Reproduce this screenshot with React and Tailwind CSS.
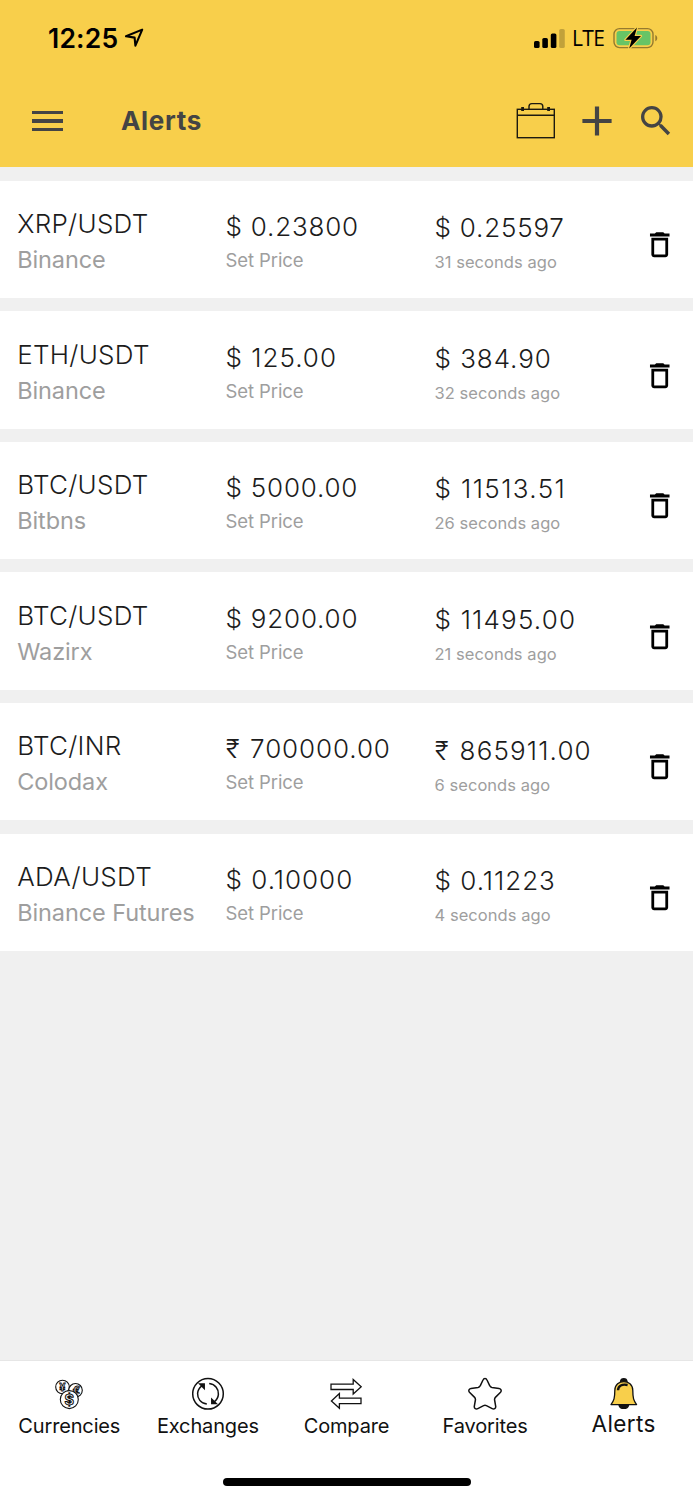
// AlertsPage.jsx
import { MdDeleteOutline, MdSearch } from 'react-icons/md';

const alerts = [
  { pair: 'XRP/USDT', exchange: 'Binance', setPrice: '$ 0.23800', price: '$ 0.25597', updated: '31 seconds ago' },
  { pair: 'ETH/USDT', exchange: 'Binance', setPrice: '$ 125.00', price: '$ 384.90', updated: '32 seconds ago', setSpacing: 'tracking-[1px]', spacing: 'tracking-[0.95px]' },
  { pair: 'BTC/USDT', exchange: 'Bitbns', setPrice: '$ 5000.00', price: '$ 11513.51', updated: '26 seconds ago', spacing: 'tracking-[1.4px]' },
  { pair: 'BTC/USDT', exchange: 'Wazirx', setPrice: '$ 9200.00', price: '$ 11495.00', updated: '21 seconds ago', spacing: 'tracking-[1.2px]' },
  { pair: 'BTC/INR', exchange: 'Colodax', setPrice: '₹ 700000.00', price: '₹ 865911.00', updated: '6 seconds ago', setSpacing: 'pl-[0.5px] tracking-[0.9px] [word-spacing:1.5px]', spacing: 'pl-[0.5px] tracking-[1.15px] [word-spacing:1.5px]' },
  { pair: 'ADA/USDT', exchange: 'Binance Futures', setPrice: '$ 0.10000', price: '$ 0.11223', updated: '4 seconds ago', setSpacing: 'tracking-[1px]', spacing: 'tracking-[1px]' },
];

function StatusBar() {
  return (
    <div className="flex h-[75px] items-center pt-px pl-[48px] pr-[35px] text-black">
      <span className="text-[26.5px] leading-[32px] font-semibold tracking-[0.2px]">12:25</span>
      <svg className="ml-[6px] h-[20px] w-[20px]" viewBox="0 0 20 20" fill="none" stroke="currentColor" strokeWidth="2.1" strokeLinejoin="round">
        <path d="M18.2 1.6 L2 8.3 L10.6 9.6 L11.4 17.6 Z" />
      </svg>
      <svg className="ml-auto h-[21px] w-[31px]" viewBox="0 0 31 21">
        <rect x="0" y="13" width="5.6" height="7" rx="1.6" />
        <rect x="8.3" y="10" width="5.6" height="10" rx="1.6" />
        <rect x="16.8" y="5.5" width="5.6" height="14.5" rx="1.6" />
        <rect x="25.2" y="1" width="5.6" height="19" rx="1.6" opacity="0.22" />
      </svg>
      <span className="ml-[7px] w-[33px] font-['Open_Sans'] text-[21px] leading-[32px] font-medium tracking-[-0.6px]">LTE</span>
      <svg className="ml-[8px] h-[24px] w-[45px]" viewBox="0 0 45 24">
        <rect x="1" y="2.6" width="39" height="19" rx="5.5" fill="none" stroke="#957a2f" strokeWidth="1.4" />
        <path d="M42.3 9 c2.6 1 2.6 5.2 0 6.2 z" fill="#957a2f" />
        <rect x="3.5" y="5" width="34" height="14.2" rx="3" fill="#67c466" />
        <path d="M24 1.5 L12.4 13.8 H18.6 L16.2 22.5 L28 10 H21.6 Z" fill="#000" stroke="#f8cf4b" strokeWidth="2.4" strokeLinejoin="round" paintOrder="stroke" />
      </svg>
    </div>
  );
}

function Toolbar() {
  return (
    <div className="flex h-[92px] items-center pl-[32px] pr-[17.5px] text-[#444]">
      <div className="flex w-[30.5px] flex-col gap-[5px]">
        <div className="h-[3.4px] bg-[#444]" />
        <div className="h-[3.4px] bg-[#444]" />
        <div className="h-[3.4px] bg-[#444]" />
      </div>
      <h1 className="ml-[58.5px] text-[26px] leading-[32px] font-bold tracking-[0.7px]">Alerts</h1>
      <svg className="mb-[2px] ml-auto h-[38px] w-[40px]" viewBox="0 0 40 38" fill="none" stroke="#1d1a10" strokeWidth="1.4">
        <rect x="1.3" y="8.3" width="37" height="28.4" />
        <path d="M1.3 14.3H38.3" />
        <path d="M13 8V5.6C13 4 14 2.6 15.8 2.6H24C25.8 2.6 26.8 4 26.8 5.6V8" />
        <path d="M6.6 6V10M32.6 6V10" strokeWidth="2.8" />
      </svg>
      <svg className="ml-[26.5px] h-[30px] w-[30px]" viewBox="0 0 30 30" stroke="#444" strokeWidth="4.2">
        <path d="M15 .4V29.6M.4 15H29.6" />
      </svg>
      <MdSearch className="ml-[23.5px] h-[40px] w-[40px]" />
    </div>
  );
}

function AlertRow({ alert }) {
  return (
    <div className="mt-[13.3px] flex h-[117.3px] bg-white text-[26px] text-[#1c1c1c]">
      <div className="w-[208.5px] pt-[25.3px] pl-[17.2px] whitespace-nowrap">
        <p className="leading-[36px] font-[350] tracking-[0.3px]">{alert.pair}</p>
        <p className="text-[23.5px] leading-[36px] tracking-[-0.1px] text-[#9e9e9e]">{alert.exchange}</p>
      </div>
      <div className="w-[209px] pt-[29.3px] pl-[17px] whitespace-nowrap">
        <p className={`leading-[34px] font-[350] ${alert.setSpacing || 'tracking-[0.8px]'}`}>{alert.setPrice}</p>
        <p className="text-[18.5px] leading-[32px] tracking-[-0.1px] text-[#9e9e9e]">Set Price</p>
      </div>
      <div className="pt-[30.6px] pl-[17px] whitespace-nowrap">
        <p className={`leading-[34px] font-[350] ${alert.spacing || 'tracking-[0.8px]'}`}>{alert.price}</p>
        <p className="text-[16.5px] leading-[34px] tracking-[0.05px] text-[#9e9e9e]">{alert.updated}</p>
      </div>
      <button className="mt-[11px] mr-[17px] ml-auto self-center text-black">
        <MdDeleteOutline className="h-[33.5px] w-[33.5px]" />
      </button>
    </div>
  );
}

function CoinsIcon() {
  return (
    <svg className="h-[32px] w-[32px] font-['Inter'] font-bold" viewBox="0 0 32 32" fill="#fff" stroke="#111" strokeWidth="1.1">
      <circle cx="9.5" cy="9" r="6.8" />
      <text x="9.5" y="13" fontSize="11" textAnchor="middle" strokeWidth="0.8">¥</text>
      <circle cx="22.5" cy="12.3" r="6.8" />
      <text x="23.5" y="16.3" fontSize="11" textAnchor="middle" strokeWidth="0.8">€</text>
      <circle cx="16.3" cy="21.6" r="9" />
      <text x="16.3" y="26.8" fontSize="14.5" textAnchor="middle" strokeWidth="1">$</text>
    </svg>
  );
}

function ExchangeIcon() {
  return (
    <svg className="h-[34px] w-[34px]" viewBox="0 0 34 34" fill="none" stroke="#111" strokeWidth="1.5">
      <circle cx="17" cy="16.8" r="15.3" />
      <path d="M15.8 27C9.6 26.3 6.4 21.5 6.6 16.4C6.8 12.8 8.2 10.8 10.8 8.8" />
      <path d="M18.2 6.6C24.4 7.3 27.6 12.1 27.4 17.2C27.2 20.8 25.8 22.8 23.2 24.8" />
      <path d="M8.8 7H13.2V11.4Z" fill="#111" />
      <path d="M25.2 26.6H20.8V22.2Z" fill="#111" />
    </svg>
  );
}

function CompareIcon() {
  return (
    <svg className="h-[34px] w-[34px]" viewBox="0 0 34 34" fill="none" stroke="#111" strokeWidth="1.3">
      <path d="M2 7.1H24.2V2.5L32.2 9.8L24.2 17.1V12.5H2Z" />
      <path d="M32 21.2H10.4V16.6L2.4 24L10.4 31.3V26.6H32Z" />
    </svg>
  );
}

function StarIcon() {
  return (
    <svg className="h-[34px] w-[34px]" viewBox="0 0 34 34" fill="none" stroke="#111" strokeWidth="1.5" strokeLinejoin="round">
      <path d="M15 3C15.8 1 18.2 1 19 3L21.8 8.8C22.3 9.9 22.8 10.3 24 10.5L31 11.4C33.3 11.7 33.8 14 32.3 15.5L27.4 20.4C26.6 21.2 26.4 21.9 26.6 23L27.7 29.3C28 31.5 26 32.6 24.2 31.6L18.4 28.6C17.4 28.1 16.6 28.1 15.6 28.6L9.8 31.6C8 32.6 6 31.5 6.3 29.3L7.4 23C7.6 21.9 7.4 21.2 6.6 20.4L1.7 15.5C.2 14 .7 11.7 3 11.4L10 10.5C11.2 10.3 11.7 9.9 12.2 8.8Z" />
    </svg>
  );
}

function BellIcon() {
  return (
    <svg className="h-[34px] w-[34px]" viewBox="0 0 34 34" stroke="#111" strokeWidth="1.3" strokeLinejoin="round">
      <path d="M13.5 4.5C14 .8 19.6 .8 20 4.5Z" fill="#111" />
      <path d="M12 28C13 32.6 20.6 32.6 21.6 28Z" fill="#111" />
      <path d="M7.8 13.5C7.8 1.6 25.8 1.6 25.8 13.5C25.8 21 26.6 23.6 29.6 27.6H4C7 23.6 7.8 21 7.8 13.5Z" fill="#f8cf4b" />
      <path d="M11 13.3C11.2 8.8 15 6.8 20.6 8" fill="none" strokeWidth="2.4" />
    </svg>
  );
}

const tabs = [
  { label: 'Currencies', Icon: CoinsIcon },
  { label: 'Exchanges', Icon: ExchangeIcon },
  { label: 'Compare', Icon: CompareIcon },
  { label: 'Favorites', Icon: StarIcon },
  { label: 'Alerts', Icon: BellIcon, active: true },
];

function TabBar() {
  return (
    <nav className="flex h-[140px] flex-col justify-between border-t border-[#e6e6e6] bg-white pt-[15.5px] pb-[14px] text-[#111]">
      <div className="grid grid-cols-5">
        {tabs.map(({ label, Icon, active }) => (
          <div key={label} className="flex flex-col items-center">
            <div className="flex h-[34px] items-center">
              <Icon />
            </div>
            {active ? (
              <span className="text-[22.5px] leading-[26px] tracking-[0.4px]">{label}</span>
            ) : (
              <span className="text-[20px] leading-[30px] tracking-[-0.15px]">{label}</span>
            )}
          </div>
        ))}
      </div>
      <div className="mx-auto h-[8px] w-[248px] rounded-full bg-black" />
    </nav>
  );
}

function AlertsPage() {
  return (
    <div className="flex h-[1500px] w-[693px] flex-col overflow-hidden bg-[#f0f0f0] font-['Inter',sans-serif]">
      <header className="h-[167.4px] bg-[#f8cf4b]">
        <StatusBar />
        <Toolbar />
      </header>
      <main className="flex-1">
        {alerts.map((alert) => (
          <AlertRow key={alert.pair + alert.exchange} alert={alert} />
        ))}
      </main>
      <TabBar />
    </div>
  );
}

export default AlertsPage;
